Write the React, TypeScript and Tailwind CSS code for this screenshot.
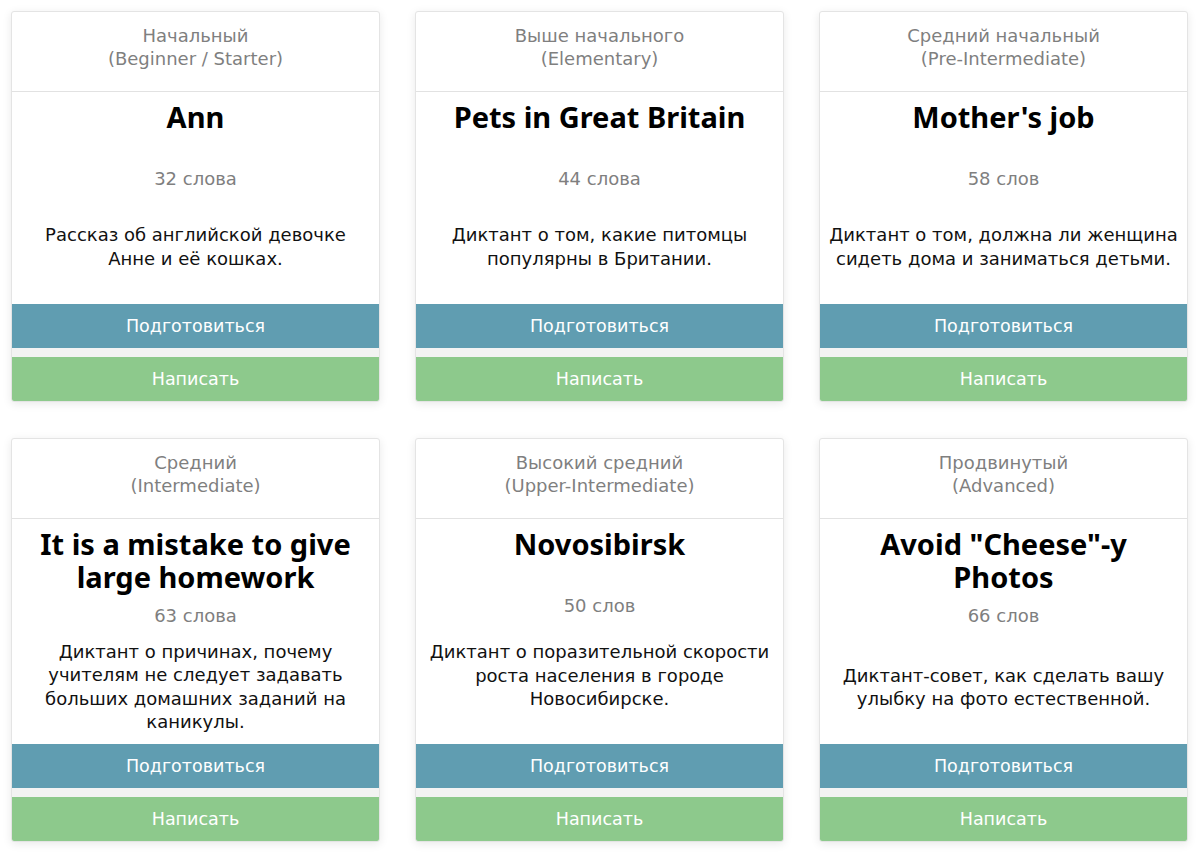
import React from "react";

type Card = {
  level: string;
  levelEn: string;
  title: string;
  count: string;
  desc: string;
};

const cards: Card[] = [
  { level: "Начальный", levelEn: "(Beginner / Starter)", title: "Ann", count: "32 слова", desc: "Рассказ об английской девочке Анне и её кошках." },
  { level: "Выше начального", levelEn: "(Elementary)", title: "Pets in Great Britain", count: "44 слова", desc: "Диктант о том, какие питомцы популярны в Британии." },
  { level: "Средний начальный", levelEn: "(Pre-Intermediate)", title: "Mother's job", count: "58 слов", desc: "Диктант о том, должна ли женщина сидеть дома и заниматься детьми." },
  { level: "Средний", levelEn: "(Intermediate)", title: "It is a mistake to give large homework", count: "63 слова", desc: "Диктант о причинах, почему учителям не следует задавать больших домашних заданий на каникулы." },
  { level: "Высокий средний", levelEn: "(Upper-Intermediate)", title: "Novosibirsk", count: "50 слов", desc: "Диктант о поразительной скорости роста населения в городе Новосибирске." },
  { level: "Продвинутый", levelEn: "(Advanced)", title: 'Avoid "Cheese"-y Photos', count: "66 слов", desc: "Диктант-совет, как сделать вашу улыбку на фото естественной." },
];

function CardView({ c }: { c: Card }) {
  return (
    <div className="flex min-h-[391px] flex-col overflow-hidden rounded-[3px] border border-[#e4e4e4] bg-white shadow-[0_2px_10px_rgba(0,0,0,0.09)]">
      <div className="flex h-[80px] flex-col items-center justify-center border-b border-[#e2e2e2] pb-[10px] text-center text-[18px] leading-[23px] text-[#7f7f7f]">
        <div>{c.level}</div>
        <div>{c.levelEn}</div>
      </div>
      <div className="flex flex-1 flex-col px-[8px] pt-[8px] pb-[11px] text-center">
        <div className="min-h-[56px] px-[20px] font-['Noto_Sans',sans-serif] text-[29px] font-bold leading-[33px] text-black">{c.title}</div>
        <div className="mt-[11px] text-[18px] leading-[24px] text-[#7f7f7f]">{c.count}</div>
        <div className="grow basis-0"></div>
        <div className="mt-3 text-[18px] leading-[23.3px] text-[#111]">{c.desc}</div>
        <div className="max-h-[23px] grow-[1000] basis-0"></div>
      </div>
      <div className="flex flex-col gap-[9px] bg-[#f3f3f3]">
        <div className="flex h-[44px] items-center justify-center bg-[#609db1] text-[17.5px] text-white">Подготовиться</div>
        <div className="flex h-[44px] items-center justify-center bg-[#8dc98c] text-[17.5px] text-white">Написать</div>
      </div>
    </div>
  );
}

export default function App() {
  return (
    <div className="min-h-[855px] bg-white pt-[11px] pl-[11px] pr-[12px]" style={{ fontFamily: '"DejaVu Sans", "Noto Sans", sans-serif' }}>
      <div className="grid grid-cols-[369px_369px_369px] gap-x-[35px] gap-y-[36px]">
        {cards.map((c, i) => (
          <CardView key={i} c={c} />
        ))}
      </div>
    </div>
  );
}
